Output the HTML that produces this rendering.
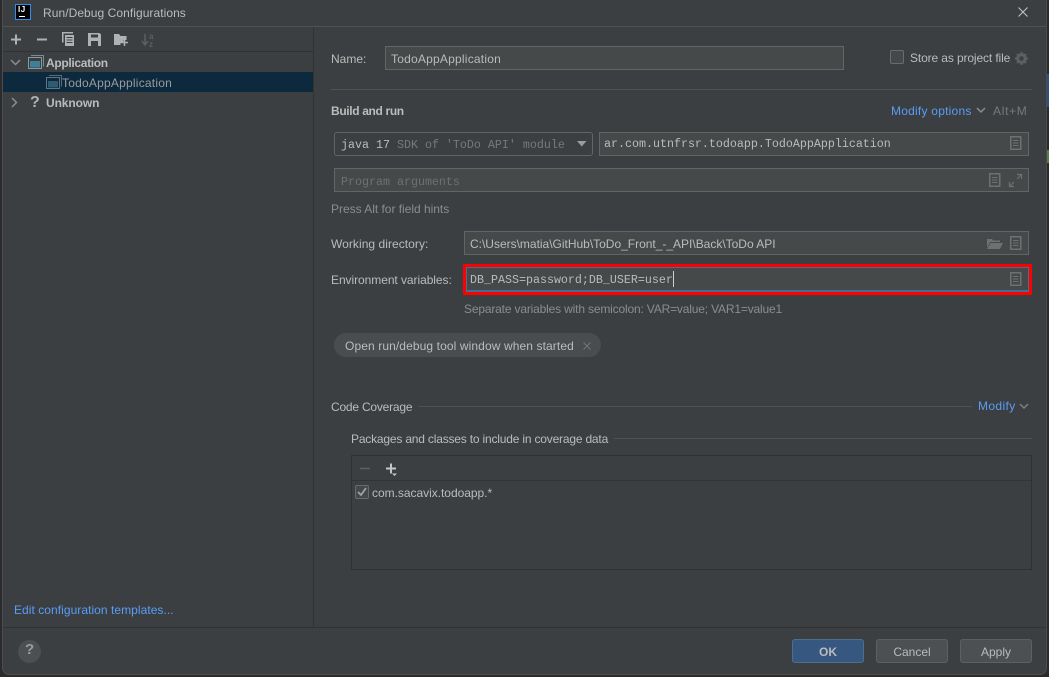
<!DOCTYPE html>
<html><head><meta charset="utf-8">
<style>
html,body{margin:0;padding:0;width:1049px;height:677px;overflow:hidden;background:#2b2b2b}
body{position:relative;font-family:"Liberation Sans",sans-serif;font-size:12px;color:#bbbbbb}
.a{position:absolute;box-sizing:border-box}
.t{position:absolute;white-space:pre;line-height:16px;height:16px}
.m{font-family:"Liberation Mono",monospace;font-size:11.67px}
.f{position:absolute;box-sizing:border-box;background:#45494a;border:1px solid #646464}
.l{position:absolute;height:1px}
.b{position:absolute;box-sizing:border-box;top:639px;width:72px;height:24px;border:1px solid #5e6060;border-radius:3px;background:#4c5052;text-align:center;line-height:24px}
svg{position:absolute;overflow:visible}
</style></head><body>
<div class="a" style="left:2px;top:0;width:1045px;height:675px;background:#3c3f41;border-radius:0 0 7px 7px;border:1px solid #4b4d4f;border-top:0"></div>
<div class="a" style="left:1047px;top:74px;width:2px;height:33px;background:#2f4f80"></div>
<div class="a" style="left:1047px;top:150px;width:2px;height:13px;background:#5b7a4d"></div>

<!-- title -->
<div class="a" style="left:15px;top:4px;width:16px;height:16px;background:#000;border:1px solid #2f8fef"></div>
<div class="t" style="left:18px;top:4px;color:#fff;font-size:8px;font-weight:bold;line-height:12px;letter-spacing:.5px">IJ</div>
<div class="a" style="left:19px;top:16px;width:6px;height:1px;background:#fff"></div>
<div class="t" style="left:43px;top:5px;letter-spacing:.06px">Run/Debug Configurations</div>
<svg style="left:1018px;top:7px" width="10" height="10"><path d="M.5.5l9 9M9.5.5l-9 9" stroke="#c4c4c4" fill="none"/></svg>
<div class="l" style="left:3px;top:26px;width:1043px;background:#515151"></div>

<!-- toolbar -->
<svg style="left:0;top:27px" width="170" height="24">
<path d="M11 12.500h10M16 7.500v10M37 12.500h10" stroke="#afb1b3" stroke-width="2" fill="none"/>
<path d="M62 5h11v1.500h-9.500v9H62z" fill="#afb1b3"/><path d="M65 8h9v11h-9z" fill="#afb1b3"/><path d="M66.500 10.500h6M66.500 13h6M66.500 15.500h6" stroke="#3c3f41"/>
<path d="M88 6h11.500l1.500 1.500V19H88z" fill="#afb1b3"/><path d="M91 7.500h7v3h-7zM91 14h7v5h-7z" fill="#3c3f41"/>
<path d="M114 7h5l1.500 2h6v4h-3v3h-3v2H114z" fill="#afb1b3"/><path d="M121 15.500h7M124.500 12v7" stroke="#afb1b3" stroke-width="1.500"/>
<path d="M145 7v11M142 14l3 4 3-4" stroke="#5d5f61" stroke-width="1.500" fill="none"/>
<text x="149" y="12" fill="#5d5f61" font-size="8" font-weight="bold" font-family="Liberation Sans">a</text>
<text x="149" y="20" fill="#5d5f61" font-size="8" font-weight="bold" font-family="Liberation Sans">z</text>
</svg>
<div class="l" style="left:3px;top:51px;width:310px;background:#323232"></div>
<div class="a" style="left:313px;top:27px;width:1px;height:600px;background:#323232"></div>

<!-- tree -->
<svg style="left:10px;top:58px" width="12" height="10"><path d="M1 2l4.500 4.500L10 2" stroke="#8b8d8f" stroke-width="1.500" fill="none"/></svg>
<svg style="left:28px;top:55px" width="16" height="15"><path d="M3 .5h12.500v11" stroke="#7c8c96" fill="none"/><rect x=".5" y="2.500" width="13" height="11" fill="#3c3f41" stroke="#8a9aa4"/><rect x="2" y="6" width="10" height="6.500" fill="#3f7f98"/></svg>
<div class="t" style="left:46px;top:55px;font-weight:bold;letter-spacing:-.32px">Application</div>
<div class="a" style="left:3px;top:72px;width:310px;height:20px;background:#0d293e"></div>
<svg style="left:46px;top:75px" width="16" height="15"><path d="M3 .5h12.500v11" stroke="#5b6a74" fill="none"/><rect x=".5" y="2.500" width="13" height="11" fill="#0d293e" stroke="#64747e"/><rect x="2" y="6" width="10" height="6.500" fill="#2b5c72"/></svg>
<div class="t" style="left:62px;top:75px;color:#9a9c9e;letter-spacing:.22px">TodoAppApplication</div>
<svg style="left:10px;top:97px" width="10" height="12"><path d="M2 1l4.500 4.500L2 10" stroke="#8b8d8f" stroke-width="1.500" fill="none"/></svg>
<div class="t" style="left:30px;top:95px;font-weight:bold;font-size:16px;color:#afb1b3">?</div>
<div class="t" style="left:46px;top:95px;font-weight:bold;letter-spacing:-.1px">Unknown</div>

<!-- name -->
<div class="t" style="left:331px;top:51px">Name:</div>
<div class="f" style="left:385px;top:46px;width:459px;height:24px"></div>
<div class="t" style="left:391px;top:51px;letter-spacing:.22px">TodoAppApplication</div>
<div class="a" style="left:890px;top:50px;width:14px;height:14px;border:1px solid #6b6b6b;border-radius:2px;background:#43494a"></div>
<div class="t" style="left:910px;top:50px;letter-spacing:-.12px">Store as project file</div>
<svg style="left:1015px;top:52px" width="13" height="13"><circle cx="6.500" cy="6.500" r="3.800" fill="none" stroke="#5d5f61" stroke-width="3"/><path d="M6.500 0v3M6.500 10v3M0 6.500h3M10 6.500h3M2 2l2 2M9 9l2 2M11 2L9 4M4 9l-2 2" stroke="#5d5f61" stroke-width="2"/></svg>

<div class="l" style="left:331px;top:89px;width:701px;background:#515151"></div>
<div class="t" style="left:331px;top:103px;font-weight:bold;letter-spacing:-.35px">Build and run</div>
<div class="t" style="left:891px;top:103px;color:#589df6;letter-spacing:.23px">Modify options</div>
<svg style="left:976px;top:107px" width="10" height="7"><path d="M1 1l4 4 4-4" stroke="#8b8d8f" stroke-width="1.500" fill="none"/></svg>
<div class="t" style="left:993px;top:103px;color:#787878;letter-spacing:.7px">Alt+M</div>

<!-- jre -->
<div class="f" style="left:334px;top:132px;width:259px;height:24px;background:#3c3f41;border-radius:3px"></div>
<div class="t m" style="left:341px;top:137px;white-space:pre"><span style="color:#bbb">java 17</span> <span style="color:#787878">SDK of 'ToDo API' module</span></div>
<svg style="left:577px;top:141px" width="10" height="6"><path d="M0 0h9.500L4.750 5.500z" fill="#9a9c9e"/></svg>
<div class="f" style="left:599px;top:132px;width:430px;height:24px"></div>
<div class="t m" style="left:604px;top:136px">ar.com.utnfrsr.todoapp.TodoAppApplication</div>
<svg style="left:1010px;top:136px" width="12" height="14"><use href="#doc"/><defs><g id="doc"><rect x=".75" y=".75" width="10" height="12.500" fill="none" stroke="#6e7072" stroke-width="1.500"/><path d="M3 4.500h5.500M3 7h5.500M3 9.500h5.500" stroke="#6e7072"/></g></defs></svg>

<div class="f" style="left:334px;top:168px;width:695px;height:24px"></div>
<div class="t m" style="left:341px;top:174px;color:#6e7072">Program arguments</div>
<svg style="left:989px;top:173px" width="12" height="14"><use href="#doc"/></svg>
<svg style="left:1009px;top:174px" width="13" height="13"><path d="M8 .5h4.500V5M12 1L8 5M5 12.500H.5V8M1 12l4-4" stroke="#6e7072" fill="none" stroke-width="1.200"/></svg>

<div class="t" style="left:331px;top:201px;color:#8c8c8c;letter-spacing:-.02px">Press Alt for field hints</div>

<!-- working dir -->
<div class="t" style="left:331px;top:236px;letter-spacing:.05px">Working directory:</div>
<div class="f" style="left:464px;top:231px;width:565px;height:24px"></div>
<div class="t" style="left:470px;top:236px;letter-spacing:-.01px">C:\Users\matia\GitHub\ToDo_Front_-_API\Back\ToDo API</div>
<svg style="left:987px;top:238px" width="16" height="11"><path d="M0 1h5l1 1.500h7V4H3L0 10z" fill="#6e7072"/><path d="M3.500 5H16l-3 6H0z" fill="#6e7072"/></svg>
<svg style="left:1010px;top:236px" width="12" height="14"><use href="#doc"/></svg>

<!-- env -->
<div class="t" style="left:331px;top:272px;letter-spacing:-.06px">Environment variables:</div>
<div class="a" style="left:463px;top:264px;width:569px;height:31px;border:3px solid #fe0000;border-radius:1px;background:#45494a"></div>
<div class="a" style="left:466px;top:267px;width:563px;height:25px;border:1px solid #466d94;border-bottom:2px solid #466d94"></div>
<div class="t m" style="left:470px;top:272px">DB_PASS=password;DB_USER=user</div>
<div class="a" style="left:673px;top:271px;width:1px;height:16px;background:#d0d0d0"></div>
<svg style="left:1010px;top:272px" width="12" height="14"><use href="#doc"/></svg>
<div class="t" style="left:464px;top:301px;color:#8c8c8c;letter-spacing:-.17px">Separate variables with semicolon: VAR=value; VAR1=value1</div>

<!-- chip -->
<div class="a" style="left:334px;top:333px;width:267px;height:24px;border-radius:12px;background:#4a4d4f"></div>
<div class="t" style="left:345px;top:338px;letter-spacing:.105px">Open run/debug tool window when started</div>
<svg style="left:583px;top:342px" width="8" height="8"><path d="M.5.5l7 7M7.500.5l-7 7" stroke="#727476" fill="none"/></svg>

<!-- coverage -->
<div class="t" style="left:331px;top:399px;letter-spacing:-.21px">Code Coverage</div>
<div class="l" style="left:418px;top:406px;width:554px;background:#515151"></div>
<div class="t" style="left:978px;top:398px;color:#589df6;letter-spacing:.38px">Modify</div>
<svg style="left:1019px;top:403px" width="10" height="7"><path d="M1 1l4 4 4-4" stroke="#7e8082" stroke-width="1.500" fill="none"/></svg>
<div class="t" style="left:351px;top:431px;letter-spacing:-.19px">Packages and classes to include in coverage data</div>
<div class="l" style="left:614px;top:438px;width:418px;background:#515151"></div>

<div class="a" style="left:351px;top:455px;width:681px;height:115px;border:1px solid #2f3133"></div>
<div class="l" style="left:352px;top:480px;width:679px;background:#323436"></div>
<svg style="left:359px;top:462px" width="40" height="16">
<path d="M1 6.500h10" stroke="#5d5f61" stroke-width="1.500"/>
<path d="M27 6.500h10M32 1.500v10" stroke="#c4c6c8" stroke-width="2"/><path d="M33 11.500h5l-2.500 2.500z" fill="#c4c6c8"/></svg>
<div class="a" style="left:355px;top:485px;width:14px;height:14px;border:1px solid #6b6b6b;border-radius:2px;background:#43494a"></div>
<svg style="left:357px;top:487px" width="10" height="10"><path d="M1 5l3 3 5-7" stroke="#a0a0a0" stroke-width="1.800" fill="none"/></svg>
<div class="t" style="left:372px;top:485px;letter-spacing:-.03px">com.sacavix.todoapp.*</div>

<!-- footer -->
<div class="t" style="left:14px;top:602px;color:#589df6;letter-spacing:.05px">Edit configuration templates...</div>
<div class="l" style="left:3px;top:627px;width:1043px;background:#323232"></div>
<div class="a" style="left:18px;top:640px;width:23px;height:23px;border-radius:50%;background:#4c5052"></div>
<div class="t" style="left:25px;top:642px;font-size:15px;font-weight:bold;color:#9a9c9e">?</div>
<div class="b" style="left:792px;background:#365880;border-color:#4c708c;font-weight:bold;color:#bbb">OK</div>
<div class="b" style="left:876px">Cancel</div>
<div class="b" style="left:960px">Apply</div>
</body></html>
